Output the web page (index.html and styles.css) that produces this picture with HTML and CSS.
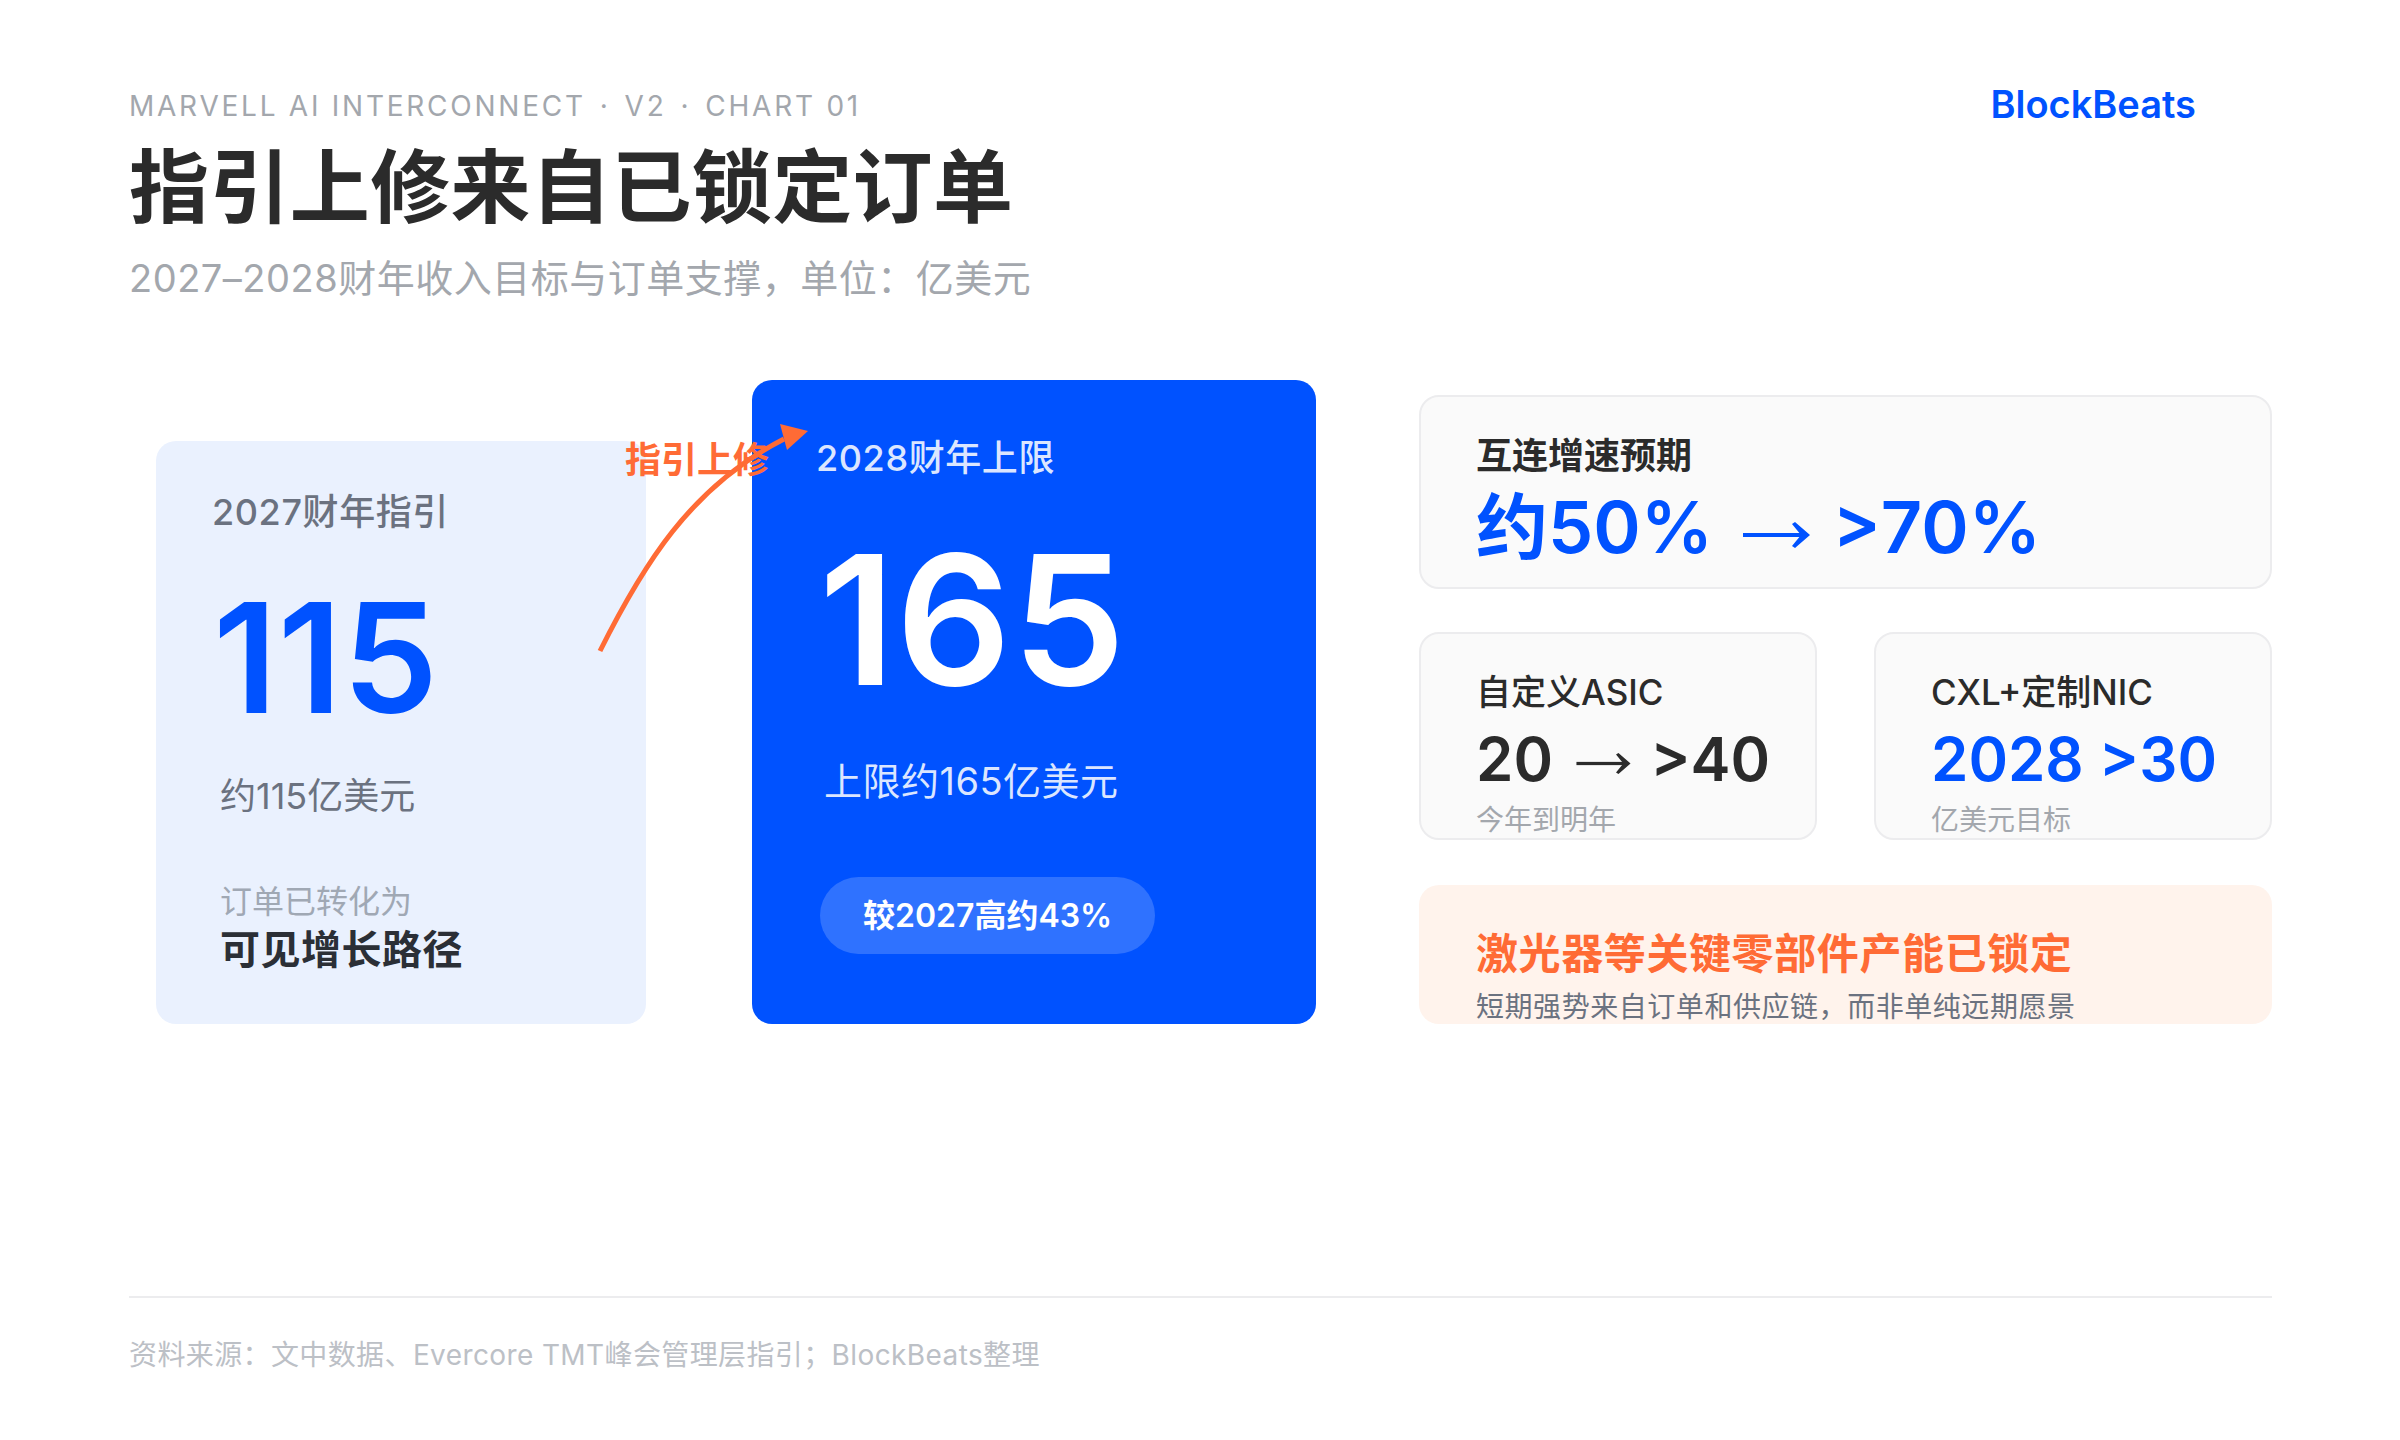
FILE: index.html
```html
<!DOCTYPE html>
<html lang="zh-CN">
<head>
    <meta charset="UTF-8">
    <meta name="viewport" content="width=device-width, initial-scale=1.0">
    <title>指引上修来自已锁定订单</title>
    <link rel="stylesheet" href="styles.css">
</head>
<body>
    <div class="slide">
        <header class="header">
            <div class="heading">
                <div class="eyebrow">MARVELL AI INTERCONNECT<span class="dot">·</span>V2<span class="dot">·</span>CHART 01</div>
                <h1>指引上修来自已锁定订单</h1>
                <div class="subtitle">2027–2028财年收入目标与订单支撑，单位：亿美元</div>
            </div>
            <div class="logo">BlockBeats</div>
        </header>

        <main class="stage">
            <section class="guide-card">
                <div class="guide-label">2027财年指引</div>
                <div class="guide-number">115</div>
                <div class="guide-note">约115亿美元</div>
                <div class="guide-muted">订单已转化为</div>
                <div class="guide-strong">可见增长路径</div>
            </section>

            <section class="cap-card">
                <div class="cap-label">2028财年上限</div>
                <div class="cap-number">165</div>
                <div class="cap-note">上限约165亿美元</div>
                <div class="cap-pill">较2027高约43%</div>
            </section>

            <section class="side">
                <div class="panel panel-wide">
                    <div class="panel-title">互连增速预期</div>
                    <div class="panel-big">约50% <svg class="arrow-icon" viewBox="0 0 67 26"><rect y="11" width="60" height="4"/><polygon points="67,13 52,0 49,2 58,13 49,24 52,26"/></svg> &gt;70%</div>
                </div>
                <div class="panel-row">
                    <div class="panel panel-small">
                        <div class="panel-title-sm">自定义ASIC</div>
                        <div class="panel-value">20 <svg class="arrow-icon" viewBox="0 0 67 26"><rect y="11" width="60" height="4"/><polygon points="67,13 52,0 49,2 58,13 49,24 52,26"/></svg> &gt;40</div>
                        <div class="panel-foot">今年到明年</div>
                    </div>
                    <div class="panel panel-small">
                        <div class="panel-title-sm">CXL+定制NIC</div>
                        <div class="panel-value blue">2028 &gt;30</div>
                        <div class="panel-foot">亿美元目标</div>
                    </div>
                </div>
                <div class="alert">
                    <div class="alert-title">激光器等关键零部件产能已锁定</div>
                    <div class="alert-note">短期强势来自订单和供应链，而非单纯远期愿景</div>
                </div>
            </section>

            <div class="raise-label">指引上修</div>
            <svg class="raise-arrow" width="240" height="240" viewBox="0 0 240 240" fill="none">
                <path d="M6 226 C 48 142, 96 62, 190 14" stroke="#ff6b35" stroke-width="5"/>
                <polygon points="214,6 186,-1 193,25" fill="#ff6b35"/>
            </svg>
        </main>

        <footer class="footer">资料来源：文中数据、Evercore TMT峰会管理层指引；BlockBeats整理</footer>
    </div>
</body>
</html>
```

FILE: styles.css
```css
* { box-sizing: border-box; }
body {
    margin: 0;
    background: #fff;
    font-family: Inter, "Noto Sans CJK SC", sans-serif;
}
.slide {
    width: 2400px;
    height: 1440px;
    padding: 88px 128px 0 129px;
    overflow: hidden;
}
.header {
    display: flex;
    justify-content: space-between;
    align-items: flex-start;
    height: 292px;
}
.eyebrow {
    font-size: 28px;
    line-height: 36px;
    letter-spacing: 2.75px;
    color: #a3a7ad;
}
.dot { margin: 0 14px; }
h1 {
    margin: 5px 0 0;
    font-size: 80px;
    line-height: 116px;
    font-weight: 700;
    letter-spacing: 0.4px;
    color: #2b2b2b;
}
.subtitle {
    margin-top: 7px;
    font-size: 38px;
    line-height: 52px;
    letter-spacing: 0.5px;
    color: #a3a7ad;
}
.logo {
    margin-right: 76px;
    font-size: 38px;
    line-height: 32px;
    font-weight: 600;
    color: #0052ff;
}
.stage {
    position: relative;
    display: flex;
    align-items: flex-end;
    height: 644px;
}
.guide-card {
    width: 490px;
    height: 583px;
    margin-left: 27px;
    padding: 48px 0 0 56px;
    background: #eaf1fe;
    border-radius: 20px;
}
.guide-label {
    font-size: 36px;
    line-height: 46px;
    font-weight: 500;
    letter-spacing: 0.6px;
    color: #6b7280;
}
.guide-number {
    margin-top: 38px;
    margin-left: 1px;
    font-size: 152px;
    line-height: 170px;
    font-weight: 600;
    letter-spacing: 0.5px;
    color: #0052ff;
}
.guide-note {
    margin: 28px 0 0 8px;
    font-size: 36px;
    line-height: 50px;
    color: #6b7280;
}
.guide-muted {
    margin: 59px 0 0 8px;
    font-size: 32px;
    line-height: 44px;
    color: #a0a8b4;
}
.guide-strong {
    margin: 1px 0 0 8px;
    font-size: 40px;
    line-height: 50px;
    font-weight: 700;
    letter-spacing: 0.5px;
    color: #2b2f36;
}
.cap-card {
    width: 564px;
    height: 644px;
    margin-left: 106px;
    padding: 55px 0 0 64px;
    background: #0052ff;
    border-radius: 20px;
    color: #fff;
}
.cap-label {
    font-size: 36px;
    line-height: 46px;
    font-weight: 500;
    letter-spacing: 0.6px;
    color: #dbe6ff;
}
.cap-number {
    margin-top: 39px;
    margin-left: 3px;
    font-size: 180px;
    line-height: 200px;
    font-weight: 600;
    letter-spacing: 1px;
}
.cap-note {
    margin: 36px 0 0 8px;
    font-size: 38px;
    line-height: 50px;
    letter-spacing: 0.5px;
    color: #dbe6ff;
}
.cap-pill {
    display: inline-block;
    margin: 71px 0 0 4px;
    padding: 0 43px;
    height: 77px;
    line-height: 77px;
    font-size: 32px;
    font-weight: 600;
    background: #2f72ff;
    border-radius: 39px;
}
.side {
    flex: 1;
    display: flex;
    flex-direction: column;
    height: 629px;
    margin-left: 103px;
}
.panel {
    background: #fafafa;
    border: 2px solid #ececee;
    border-radius: 20px;
    overflow: hidden;
}
.panel-wide {
    height: 194px;
    padding: 35px 0 0 55px;
}
.panel-title {
    font-size: 36px;
    line-height: 48px;
    font-weight: 600;
    color: #2b2b2b;
}
.panel-big {
    margin-top: 7px;
    font-size: 72px;
    line-height: 80px;
    font-weight: 600;
    color: #0052ff;
}
.arrow-icon {
    width: 67px;
    height: 26px;
    margin: 0 4px 0 12px;
    vertical-align: 5px;
    fill: currentColor;
}
.panel-row {
    display: flex;
    justify-content: space-between;
    margin-top: 43px;
}
.panel-small {
    width: 398px;
    height: 208px;
    padding: 36px 0 0 55px;
}
.panel-small .arrow-icon {
    width: 55px;
    height: 21px;
    margin: 0 4px 0 8px;
    vertical-align: 7px;
}
.panel-title-sm {
    font-size: 35px;
    line-height: 44px;
    font-weight: 500;
    color: #2b2b2b;
}
.panel-value {
    margin-top: 10px;
    font-size: 60px;
    line-height: 70px;
    font-weight: 600;
    color: #2b2b2b;
}
.panel-value.blue { color: #0052ff; }
.panel-foot {
    margin-top: 6px;
    font-size: 28px;
    line-height: 40px;
    color: #a3a7ad;
}
.alert {
    height: 139px;
    margin-top: 45px;
    padding: 41px 0 0 57px;
    background: #fff3ec;
    border-radius: 20px;
    overflow: hidden;
}
.alert-title {
    font-size: 42px;
    line-height: 56px;
    font-weight: 700;
    letter-spacing: 0.6px;
    color: #ff6b35;
}
.alert-note {
    margin-top: 5px;
    font-size: 28px;
    line-height: 40px;
    letter-spacing: 0.55px;
    color: #6b7280;
}
.raise-label {
    position: absolute;
    left: 496px;
    top: 56px;
    font-size: 36px;
    line-height: 48px;
    font-weight: 700;
    color: #ff6b35;
}
.raise-arrow {
    position: absolute;
    left: 465px;
    top: 45px;
    overflow: visible;
}
.footer {
    margin-top: 272px;
    padding-top: 38px;
    border-top: 2px solid #ececee;
    font-size: 28px;
    line-height: 38px;
    letter-spacing: 0.39px;
    color: #bcc0c6;
}
```
